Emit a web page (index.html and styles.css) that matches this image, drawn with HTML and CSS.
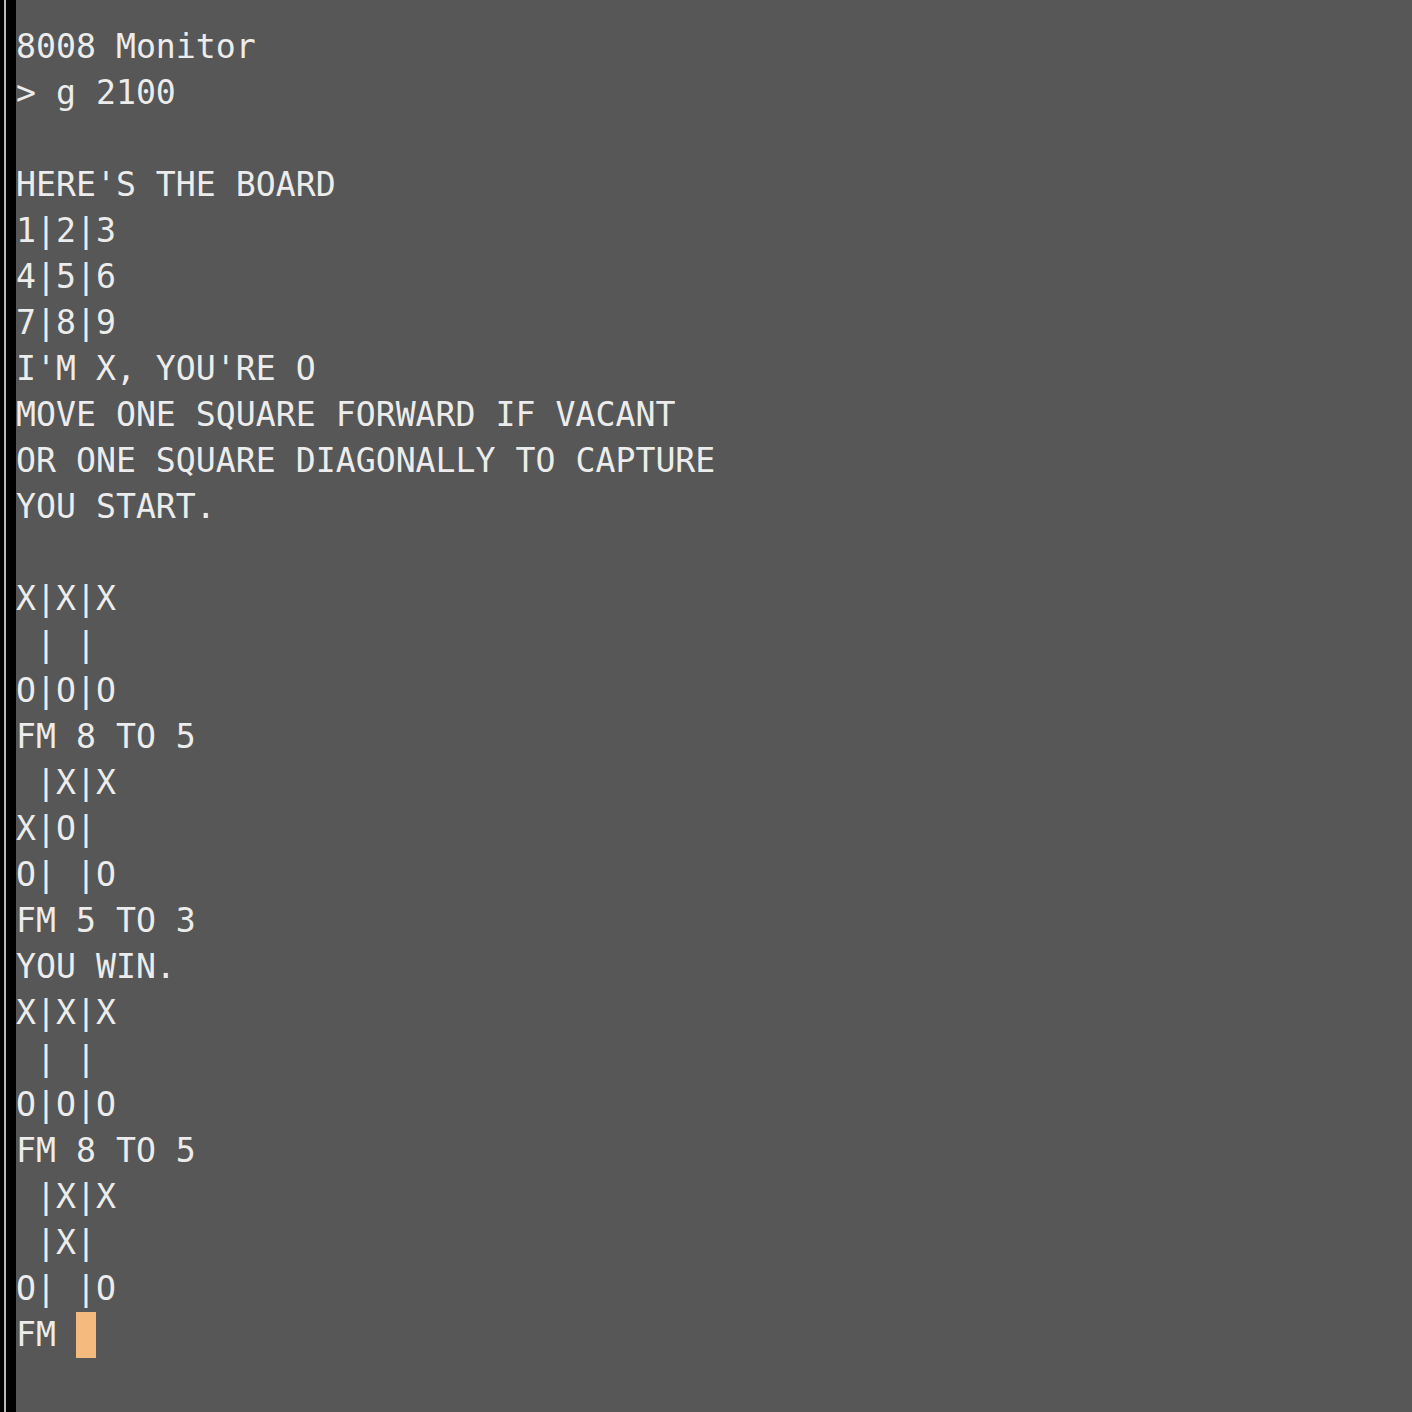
FILE: index.html
```html
<!DOCTYPE html>
<html>
<head>
<meta charset="utf-8">
<link rel="stylesheet" href="styles.css">
</head>
<body>
<div class="term">
<div class="edge"><div class="edge-a"></div><div class="edge-b"></div><div class="edge-c"></div></div>
<pre class="screen">8008 Monitor
&gt; g 2100

HERE'S THE BOARD
1|2|3
4|5|6
7|8|9
I'M X, YOU'RE O
MOVE ONE SQUARE FORWARD IF VACANT
OR ONE SQUARE DIAGONALLY TO CAPTURE
YOU START.

X|X|X
 | |
O|O|O
FM 8 TO 5
 |X|X
X|O|
O| |O
FM 5 TO 3
YOU WIN.
X|X|X
 | |
O|O|O
FM 8 TO 5
 |X|X
 |X|
O| |O
FM <span class="cursor"> </span></pre>
</div>
</body>
</html>
```
FILE: styles.css
```css
html, body {
  margin: 0;
  padding: 0;
  background: #575757;
  height: 100%;
}
.term {
  display: flex;
  min-height: 1412px;
}
.edge {
  display: flex;
  flex: 0 0 16px;
}
.edge-a { width: 4px; background: #000; }
.edge-b { width: 2px; background: #b8b8b8; }
.edge-c { width: 10px; background: #000; }
.screen {
  margin: 0;
  padding: 24px 0 0 0;
  font-family: "DejaVu Sans Mono", monospace;
  font-size: 33.2px;
  line-height: 46px;
  color: #ececec;
}
.cursor {
  display: inline-block;
  width: 20px;
  height: 46px;
  vertical-align: top;
  background: #f5ba7d;
}
```
